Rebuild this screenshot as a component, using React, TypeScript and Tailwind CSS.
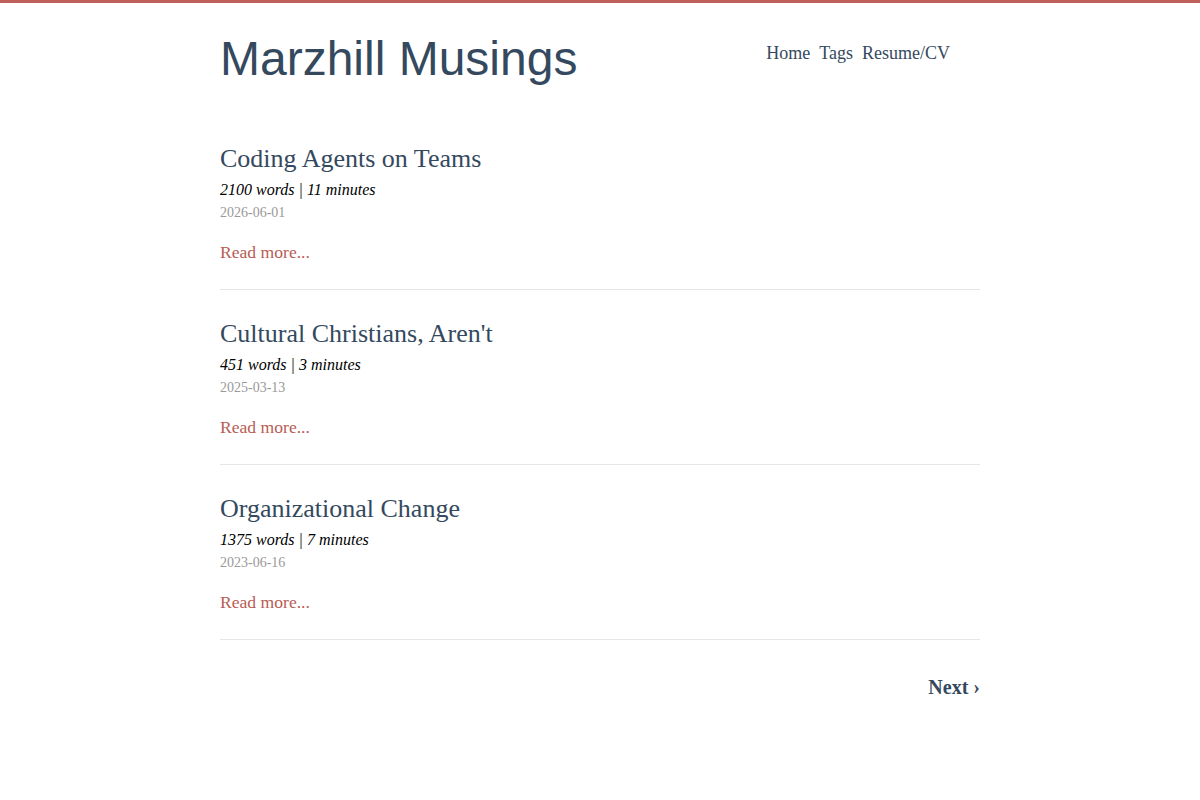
const posts = [
  { title: "Coding Agents on Teams", words: 2100, minutes: 11, date: "2026-06-01" },
  { title: "Cultural Christians, Aren't", words: 451, minutes: 3, date: "2025-03-13" },
  { title: "Organizational Change", words: 1375, minutes: 7, date: "2023-06-16" },
];

const serif = "font-['Liberation_Serif','Times_New_Roman',serif]";

export default function App() {
  return (
    <div className={`min-h-[800px] bg-white border-t-[3px] border-[#c0605a] ${serif}`}>
      <div className="w-[760px] mx-auto">
        <header className="flex justify-between items-start mt-[28px]">
          <h1 className="font-['Liberation_Sans',Arial,sans-serif] text-[48px] leading-[56px] text-[#34495e]">
            Marzhill Musings
          </h1>
          <nav className="flex gap-[9px] mt-[10px] pr-[30px] text-[18px] leading-[24px] text-[#34495e]">
            <a href="#">Home</a>
            <a href="#">Tags</a>
            <a href="#">Resume/CV</a>
          </nav>
        </header>

        <main className="mt-[28px]">
          {posts.map((p) => (
            <article key={p.title} className="pt-[28px] pb-[25px] border-b border-[#e6e6e6]">
              <h2 className="text-[26px] leading-[32px] text-[#34495e]">{p.title}</h2>
              <div className="mt-[3px] text-[16px] leading-[24px] italic text-black">
                {p.words} words | {p.minutes} minutes
              </div>
              <div className="mt-[1px] text-[14px] leading-[20px] text-[#999]">{p.date}</div>
              <a href="#" className="block mt-[17px] text-[17.6px] leading-[24px] text-[#b85c54]">
                Read more...
              </a>
            </article>
          ))}
        </main>

        <div className="flex justify-end mt-[33px]">
          <a href="#" className="text-[20px] leading-[28px] font-bold text-[#34495e]">
            Next ›
          </a>
        </div>
      </div>
    </div>
  );
}
